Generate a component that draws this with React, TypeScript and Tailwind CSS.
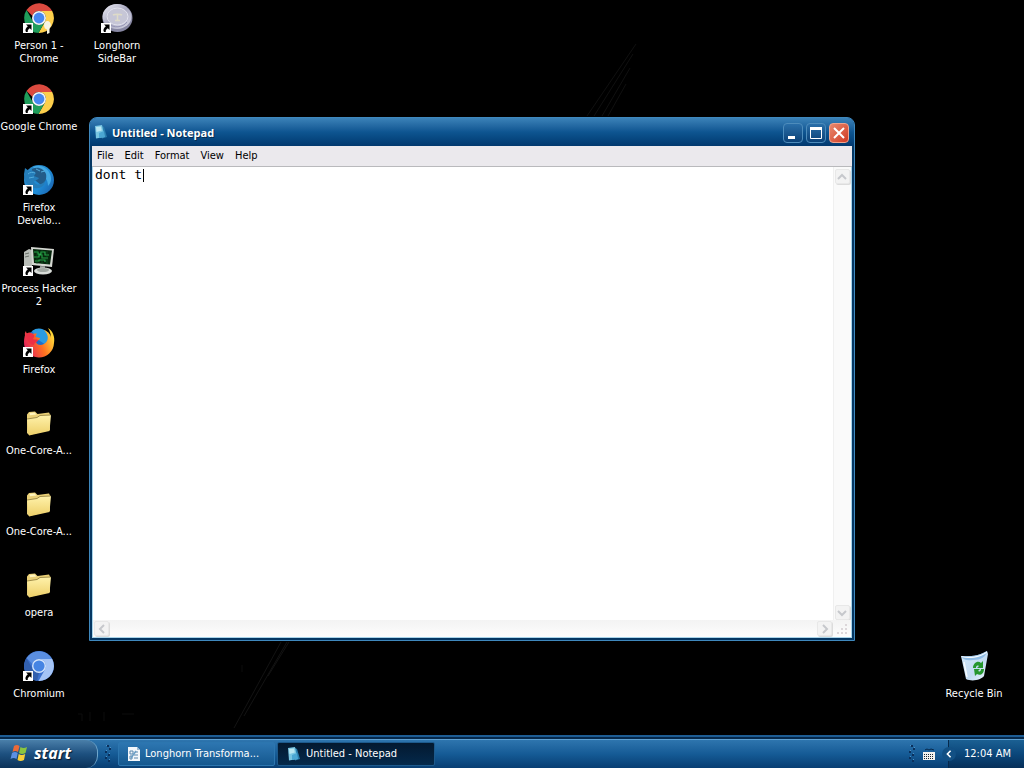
import { useState } from "react";
import type { ReactNode } from "react";

function Shortcut() {
  return (
    <g>
      <path d="M0 21h10v10H0z" fill="#fff" />
      <path d="M3 22.500h5.500v5.500L6.800 26.300C5 27.500 4.500 28.500 4.800 30H3C1.800 28 2.500 26.500 4.800 24.300z" fill="#000" />
    </g>
  );
}

function ChromeIcon({ person = false }: { person?: boolean }) {
  return (
    <svg viewBox="0 0 32 32" className="h-8 w-8">
      <path d="M3.500 8A15 15 0 0 1 29.200 9H16a7 7 0 0 0-6.500 5z" fill="#db4a3f" />
      <path d="M29.200 9A15 15 0 0 1 15.500 31L22 19.500A7 7 0 0 0 16 9z" fill="#fdcf4c" />
      <path d="M3.500 8A15 15 0 0 0 15.500 31L22 19.500A7 7 0 0 1 10 19.500z" fill="#1f9d5b" />
      <circle cx="16" cy="16" r="7" fill="#f4f6f4" />
      <circle cx="16" cy="16" r="5.400" fill="#4688f1" />
      {person && (
        <path d="M24.500 19c2 0 3.300 1.800 3.300 4 0 1.500-.6 2.500-1.300 3.200v4.800l-2.500 1v-4.500c-2-.5-3-2.300-3-4.500s1.500-4 3.500-4z" fill="#f7f5e4" />
      )}
      <Shortcut />
    </svg>
  );
}

function ChromiumIcon() {
  return (
    <svg viewBox="0 0 32 32" className="h-8 w-8">
      <circle cx="16" cy="16" r="15" fill="#3c72cf" />
      <path d="M3.500 8A15 15 0 0 1 29.200 9H16a7 7 0 0 0-6.500 5z" fill="#5a8ee0" />
      <path d="M29.200 9A15 15 0 0 1 15.500 31L22 19.500A7 7 0 0 0 16 9z" fill="#a5c4f5" />
      <path d="M3.500 8 10 19.500l6 3.500-2 8A15 15 0 0 1 3.500 8z" fill="#315fae" />
      <circle cx="16" cy="16" r="7" fill="#d3e4fb" />
      <circle cx="16" cy="16" r="5.600" fill="#4584e3" />
      <Shortcut />
    </svg>
  );
}

function SideBarIcon() {
  return (
    <svg viewBox="0 0 32 32" className="h-8 w-8">
      <defs>
        <linearGradient id="disc" x1="0" y1="0" x2="1" y2="1">
          <stop offset="0" stopColor="#f0f0f8" />
          <stop offset=".5" stopColor="#a9a9c0" />
          <stop offset="1" stopColor="#dcdcea" />
        </linearGradient>
      </defs>
      <ellipse cx="16.500" cy="16" rx="15" ry="14" fill="#8787a2" />
      <ellipse cx="16" cy="14.500" rx="14.500" ry="12.500" fill="url(#disc)" />
      <ellipse cx="16.500" cy="14.500" rx="10.500" ry="8.500" fill="#c6c6d6" stroke="#e2e2ee" />
      <path d="M12 13c2-1 7-1 9 0M16.500 13v5M14 18.500h5" fill="none" stroke="#dedbc8" strokeWidth="1.500" />
      <path d="M8 22c4 4 14 4 18-2" fill="none" stroke="#9696b6" />
      <Shortcut />
    </svg>
  );
}

function FirefoxIcon() {
  return (
    <svg viewBox="0 0 32 32" className="h-8 w-8">
      <defs>
        <linearGradient id="fox" x1="0" y1=".6" x2="1" y2=".2">
          <stop offset="0" stopColor="#e3205b" />
          <stop offset=".5" stopColor="#ff7020" />
          <stop offset="1" stopColor="#ffe63c" />
        </linearGradient>
      </defs>
      <circle cx="16" cy="15" r="12" fill="#1f6fca" />
      <path d="M9 5C14 1 20 2 24 6c3 4 2 9-1 13l-9-6z" fill="#2c9be2" />
      <path
        d="M3 5c0 1 .5 2 1 2.500C6 6 8 6.500 10 8c1-.5 3-.5 4-.3-1 1-1.500 2.300-1.300 3.300l4.300 1c0 2-3 2.500-4 4 1 4 8 4 11-1 2-4 0-8-3-11 5 2 7 5 7 8 0-3-1-7-3-10 5 3 7 9 6 15a15 15 0 0 1-30-1c0-3 .5-5 1-7C1.500 8 2 6 3 5z"
        fill="url(#fox)"
      />
      <path d="M3 8c4-2 6-1 8 1 1 2-1 3-1 4 1 1 4 0 5 1-1 3-4 2-4 5-4 0-8-5-8-11z" fill="#ed2f46" />
      <Shortcut />
    </svg>
  );
}

function FirefoxDeveloperIcon() {
  return (
    <svg viewBox="0 0 32 32" className="h-8 w-8">
      <defs>
        <linearGradient id="foxDev" x1="0" y1=".2" x2="1" y2=".8">
          <stop offset="0" stopColor="#2b86c2" />
          <stop offset=".6" stopColor="#1f8dd8" />
          <stop offset="1" stopColor="#1c63ae" />
        </linearGradient>
      </defs>
      <circle cx="16" cy="16" r="15" fill="url(#foxDev)" />
      <path d="M10 3c6-3 14 0 17 7 2 5 1 9-2 12 0-7-4-11-9-12z" fill="#43a9e4" />
      <path d="M9 5c6-3 12 0 14 5 1 5-1 9-5 11L8 13z" fill="#235c89" />
      <path d="M2 4l4 3c3-1 5 0 7 2l-2 3 5 2c-2 3-5 2-5 4 3 4 8 3 11-1 0 6-7 9-13 6-6-2-8-8-8-13z" fill="#257db9" />
      <path d="M5 10c2-2 5-2 7-1M6 14l5-1M13 5l4 2M18 8l4-1" fill="none" stroke="#54aedd" />
      <Shortcut />
    </svg>
  );
}

function HackerIcon() {
  return (
    <svg viewBox="0 0 32 32" className="h-8 w-8">
      <path d="m1 7 5-3 3 1v18l-4 1-4-2z" fill="#b9beb8" />
      <path d="M2 9l4-1M2 12l4-1" stroke="#697068" />
      <path d="M8 2l23 2-2 18-20-2z" fill="#d5d8d2" />
      <path d="M10 4l19 1.500-2 14-16-1.500z" fill="#07260d" />
      <path d="M11 7h4v2h3V7h4v3h4M11 12h5v-2h3v3h6M12 16h4v-1h6v2" fill="none" stroke="#28a64a" strokeWidth="1.200" />
      <path d="M14 5v14M19 5v14M24 6v13" stroke="#116527" strokeWidth=".6" />
      <path d="M17 21h5v4h-5z" fill="#8b908c" />
      <ellipse cx="20" cy="26" rx="9" ry="3.500" fill="#d8dcd8" />
      <ellipse cx="20" cy="25" rx="6" ry="2" fill="#a0a7a1" />
      <Shortcut />
    </svg>
  );
}

function FolderIcon() {
  return (
    <svg viewBox="0 0 32 32" className="h-8 w-8">
      <defs>
        <linearGradient id="folder" x1="0" y1="0" x2="0" y2="1">
          <stop offset="0" stopColor="#fff2ab" />
          <stop offset="1" stopColor="#edcf68" />
        </linearGradient>
      </defs>
      <path d="M4 7.500L6 5l6-.5L14.500 7 26 5.500l1 2V23L6 28l-2-2z" fill="#ead077" />
      <path d="M6.500 6l5-.5 2 2-6.500.8z" fill="#fff4bd" />
      <path d="M4 12l10-1.500 3-2L28 8l-1.500 16L6 28.500z" fill="url(#folder)" />
      <path d="M4 12l10-1.500 3-2L28 8" fill="none" stroke="#8c7838" strokeWidth=".8" />
    </svg>
  );
}

function RecycleIcon() {
  return (
    <svg viewBox="0 0 32 32" className="h-8 w-8">
      <defs>
        <linearGradient id="bin" x1="0" y1="0" x2="1" y2="1">
          <stop offset="0" stopColor="#d4e9fa" />
          <stop offset=".6" stopColor="#c2dbf2" />
          <stop offset="1" stopColor="#eef6fc" />
        </linearGradient>
      </defs>
      <path d="M3 6c7 1 18 0 26-5l1 3-4 22c-3 4-12 6-18 3z" fill="url(#bin)" />
      <path d="M3 6c7 1 18 0 26-5-1 6-6 9-14 9C9 11 5 10 3 6z" fill="#8fbce6" />
      <path d="M3.500 6.500c7 2 18 1 25.500-4.500" fill="none" stroke="#f5fbff" strokeWidth="1.200" />
      <path d="M6 12l3 15" stroke="#f5fbff" strokeWidth="1.500" />
      <path d="M15 18c0-5 5-8 8-5l2-2v7h-6l2-2c-2-1-3 0-3 2z" fill="#25962d" />
      <path d="M26 19c0 5-4 7-7 5l-2 2-1-7h6l-2 2c2 1 3 0 3-2z" fill="#25962d" />
    </svg>
  );
}

function NotepadIcon() {
  return (
    <svg viewBox="0 0 16 16" className="h-4 w-4 shrink-0">
      <path d="M9 2l2 1 3 10-5 1.500z" fill="#2b7fae" />
      <path d="M2 2l7-1 2.500 12L3 14.500z" fill="#79c6e2" />
      <path d="M3 3l5-.5.8 4L3.500 8z" fill="#b9e6f1" />
      <path d="M6 9l5-2 1 6-6 1z" fill="#4ba7d3" />
    </svg>
  );
}

function DocIcon() {
  return (
    <svg viewBox="0 0 16 16" className="h-4 w-4 shrink-0">
      <path d="M2 1h9l3 3v11H2z" fill="#f3f7fb" />
      <path d="M11 1v3h3" fill="#9dbad4" />
      <path d="M4 5h3v3H4zM4 10h2v3H4zM8 9h4M8 12h4M9 6h3" fill="none" stroke="#5a87ae" />
      <path d="M5 12l5-7" stroke="#6b9fc6" strokeWidth="1.500" />
    </svg>
  );
}

function Flag() {
  return (
    <svg viewBox="0 0 18 18" className="h-[18px] w-[18px]">
      <path d="M4 2c2-1.500 3.500-1.500 5.500 0L8 8c-2-1.500-3.500-1.500-5.500 0z" fill="#ed6a38" />
      <path d="M10.500 3c2 1.300 4 1.300 6.500 0L15.500 9c-2.500 1.300-4.500 1.300-6.500 0z" fill="#8bc63f" />
      <path d="M2 9c2-1.500 3.700-1.500 5.700 0L6.500 15c-2-1.500-4-1.500-6 0z" fill="#5c90e3" />
      <path d="M8.700 10c2 1.300 4 1.300 6.500 0L14 16c-2.500 1.300-4.500 1.300-6.500 0z" fill="#f8cf38" />
    </svg>
  );
}

function Grip() {
  return (
    <svg viewBox="0 0 8 20" className="h-5 w-2 shrink-0">
      <path d="M3 1h2v2H3zM5 4h2v2H5zM1 7h2v2H1zM4 10h2v2H4zM1 13h2v2H1zM4 16h2v2H4z" fill="#0a305c" />
      <path d="M2 1h1v1H2zM6 3h1v1H6zM2 6h1v1H2zM5 9h1v1H5zM2 12h1v1H2zM5 15h1v1H5z" fill="#4d91c6" />
    </svg>
  );
}

function DesktopIcon({ label, children }: { label: ReactNode; children: ReactNode }) {
  return (
    <button className="flex h-[81px] w-[78px] flex-col items-center gap-[5px] pt-[2px] text-center text-[11px] leading-[13px] text-white">
      {children}
      <span className="whitespace-nowrap">{label}</span>
    </button>
  );
}

function ScrollButton({ d, label }: { d: string; label: string }) {
  return (
    <button
      aria-label={label}
      className="flex h-[15px] w-[15px] shrink-0 items-center justify-center rounded-xs border border-[#e8e8e8] bg-[#f3f3f3] shadow-[1px_1px_0_#dcdcdc]"
    >
      <svg viewBox="0 0 10 10" className="h-[10px] w-[10px]">
        <path d={d} fill="none" stroke="#c6c8cc" strokeWidth="2" />
      </svg>
    </button>
  );
}

const menus = ["File", "Edit", "Format", "View", "Help"];

function NotepadWindow() {
  const [text, setText] = useState("dont t");

  return (
    <section className="absolute top-[117px] left-[89px] flex h-[524px] w-[766px] flex-col rounded-t-lg border border-[#3f88bd] bg-[#053763] px-[2px] pb-[2px]">
      <header className="-mx-[2px] flex h-7 shrink-0 items-center gap-[3px] rounded-t-md bg-linear-to-b from-[#3b82b8] via-[#0e5591] to-[#02396f] pr-[2px] pl-[3px]">
        <NotepadIcon />
        <h1 className="grow pt-[2px] font-['Open_Sans','Noto_Sans',sans-serif] text-[11px] font-bold text-white [text-shadow:1px_1px_#052c50]">
          Untitled - Notepad
        </h1>
        <div className="flex gap-[3px] pt-px pr-[3px]">
          <button aria-label="Minimize" className="h-5 w-5 rounded-sm border border-[#4d8cbb] bg-linear-to-b from-[#2a6fa9] to-[#0a4278]">
            <svg viewBox="0 0 18 18">
              <path d="M4 12h7v3H4z" fill="#fff" />
            </svg>
          </button>
          <button aria-label="Maximize" className="h-5 w-5 rounded-sm border border-[#4d8cbb] bg-linear-to-b from-[#2a6fa9] to-[#0a4278]">
            <svg viewBox="0 0 18 18">
              <path d="M3.500 5v9.500h11V5z" fill="none" stroke="#fff" />
              <path d="M3 3h12v3H3z" fill="#fff" />
            </svg>
          </button>
          <button aria-label="Close" className="h-5 w-5 rounded-sm border border-[#f0a28c] bg-linear-to-br from-[#e8886e] to-[#cf3620]">
            <svg viewBox="0 0 18 18">
              <path d="M4 4l10 10M14 4L4 14" stroke="#fff" strokeWidth="2" />
            </svg>
          </button>
        </div>
      </header>
      <nav className="flex h-[21px] shrink-0 items-center gap-px border-b border-[#b9b9bc] bg-[#ebe9ed] text-[11px] text-black">
        {menus.map((menu) => (
          <button key={menu} className="px-[5px]">
            {menu}
          </button>
        ))}
      </nav>
      <div className="flex min-h-0 grow flex-col border border-t-0 border-[#a8d4ea] bg-white">
        <div className="flex min-h-0 grow">
          <div className="relative grow">
            <textarea
              aria-label="Document text"
              spellCheck={false}
              value={text}
              onChange={(e) => setText(e.target.value)}
              className="block h-full w-full resize-none px-[2px] font-['DejaVu_Sans_Mono',monospace] text-[13px] leading-4 text-black caret-transparent outline-none"
            />
            <span className="absolute top-[2px] left-[50px] h-[13px] w-px bg-black" />
          </div>
          <div className="flex w-[18px] flex-col items-center justify-between border-l border-[#f0f0f0] bg-[#fafafa] pt-[2px] pr-px">
            <ScrollButton label="Scroll up" d="M1 7l4-4 4 4" />
            <ScrollButton label="Scroll down" d="M1 3l4 4 4-4" />
          </div>
        </div>
        <div className="flex h-[17px] shrink-0 items-center bg-linear-to-b from-[#f3f3f3] to-[#fdfdfd]">
          <div className="flex grow justify-between px-px">
            <ScrollButton label="Scroll left" d="M7 1L3 5l4 4" />
            <ScrollButton label="Scroll right" d="M3 1l4 4-4 4" />
          </div>
          <svg viewBox="0 0 18 18" className="h-[18px] w-[18px]">
            <path d="M12 4h2v2h-2zM8 8h2v2H8zM12 8h2v2h-2zM4 12h2v2H4zM8 12h2v2H8zM12 12h2v2h-2z" fill="#dcd7da" />
          </svg>
        </div>
      </div>
    </section>
  );
}

function Taskbar() {
  return (
    <footer className="flex h-[33px] shrink-0 border-t-2 border-[#1d5c93] bg-[#06294c] pt-[2px] text-[11px] text-white">
      <div className="flex min-w-0 grow border-t border-[#5d9fd0] bg-linear-to-b from-[#2e75ae] via-[#155b96] to-[#083e73]">
        <button className="flex w-[98px] shrink-0 items-center gap-[6px] rounded-r-xl border-r border-[#70a7cc] bg-linear-to-b from-[#4a7fa9] via-[#1d507f] to-[#0b3259] pb-[2px] pl-[10px]">
          <Flag />
          <span className="font-['Open_Sans',sans-serif] text-base font-bold italic [text-shadow:1px_1px_1px_#001a33]">start</span>
        </button>
        <div className="flex w-5 shrink-0 items-center justify-center">
          <Grip />
        </div>
        <div className="flex grow items-center gap-[2px]">
          <button className="flex h-6 w-[157px] items-center gap-[3px] rounded-xs border border-[#2c76af] bg-linear-to-b from-[#2d76b1] to-[#14588f] px-[7px] whitespace-nowrap">
            <DocIcon />
            Longhorn Transforma...
          </button>
          <button className="flex h-6 w-[158px] items-center gap-1 rounded-xs border border-[#1d5a8c] bg-linear-to-b from-[#031930] to-[#04294b] px-2 whitespace-nowrap">
            <NotepadIcon />
            Untitled - Notepad
          </button>
        </div>
        <div className="flex shrink-0 items-center gap-[6px] pr-3">
          <Grip />
          <svg viewBox="0 0 14 14" className="h-[14px] w-[14px]">
            <path d="M3 3l2-1 2 1 2-1 3 1" fill="none" stroke="#06284b" />
            <path d="M1 5h12v8H1z" fill="#f2f2ef" />
            <path d="M2 7.500h10M2 9.500h10M2 11.500h10" stroke="#182633" strokeDasharray="1 1" />
          </svg>
        </div>
        <div className="flex shrink-0 items-center border-l border-[#06294c] bg-linear-to-b from-[#1b6093] via-[#0b477b] to-[#062f59] pr-[13px]">
          <button
            aria-label="Show hidden icons"
            className="mr-2 -ml-[7px] flex h-[14px] w-[14px] items-center justify-center rounded-full bg-[#125084]"
          >
            <svg viewBox="0 0 10 10" className="h-2 w-2">
              <path d="M7 1L3 5l4 4" fill="none" stroke="#fff" strokeWidth="2" />
            </svg>
          </button>
          <time>12:04 AM</time>
        </div>
      </div>
    </footer>
  );
}

export default function App() {
  return (
    <div className="flex min-h-screen flex-col bg-black font-['DejaVu_Sans_Condensed','DejaVu_Sans',sans-serif]">
      <main className="relative flex grow">
        <svg viewBox="0 0 1024 735" className="absolute top-0 left-0 w-full" aria-hidden="true">
          <path d="M587 116l49-72M594 116l39-62M602 116l28-48M608 116l18-32" stroke="#101010" />
          <path d="M234 728l47-86M244 716l43-74M268 676l21-34" stroke="#131313" />
          <path d="M242 665v7M78 714h4v7M90 712v9M104 712v9M122 714h12" fill="none" stroke="#0c0c0c" />
        </svg>
        <div className="flex flex-col">
          <DesktopIcon label={<>Person 1 -<br />Chrome</>}>
            <ChromeIcon person />
          </DesktopIcon>
          <DesktopIcon label="Google Chrome">
            <ChromeIcon />
          </DesktopIcon>
          <DesktopIcon label={<>Firefox<br />Develo...</>}>
            <FirefoxDeveloperIcon />
          </DesktopIcon>
          <DesktopIcon label={<>Process Hacker<br />2</>}>
            <HackerIcon />
          </DesktopIcon>
          <DesktopIcon label="Firefox">
            <FirefoxIcon />
          </DesktopIcon>
          <DesktopIcon label="One-Core-A...">
            <FolderIcon />
          </DesktopIcon>
          <DesktopIcon label="One-Core-A...">
            <FolderIcon />
          </DesktopIcon>
          <DesktopIcon label="opera">
            <FolderIcon />
          </DesktopIcon>
          <DesktopIcon label="Chromium">
            <ChromiumIcon />
          </DesktopIcon>
        </div>
        <div className="grow">
          <DesktopIcon label={<>Longhorn<br />SideBar</>}>
            <SideBarIcon />
          </DesktopIcon>
        </div>
        <div className="flex flex-col justify-end pr-[11px] pb-[6px]">
          <DesktopIcon label="Recycle Bin">
            <RecycleIcon />
          </DesktopIcon>
        </div>
        <NotepadWindow />
      </main>
      <Taskbar />
    </div>
  );
}
